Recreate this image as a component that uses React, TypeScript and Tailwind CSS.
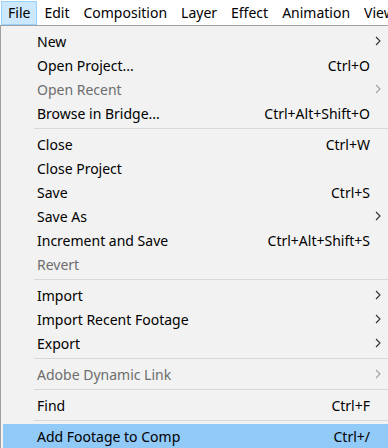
const menuBar = ['File', 'Edit', 'Composition', 'Layer', 'Effect', 'Animation', 'View']

type Item =
  | { sep: true }
  | { label: string; shortcut?: string; sub?: boolean; disabled?: boolean; active?: boolean; sep?: false }

const items: Item[] = [
  { label: 'New', sub: true },
  { label: 'Open Project...', shortcut: 'Ctrl+O' },
  { label: 'Open Recent', sub: true, disabled: true },
  { label: 'Browse in Bridge...', shortcut: 'Ctrl+Alt+Shift+O' },
  { sep: true },
  { label: 'Close', shortcut: 'Ctrl+W' },
  { label: 'Close Project' },
  { label: 'Save', shortcut: 'Ctrl+S' },
  { label: 'Save As', sub: true },
  { label: 'Increment and Save', shortcut: 'Ctrl+Alt+Shift+S' },
  { label: 'Revert', disabled: true },
  { sep: true },
  { label: 'Import', sub: true },
  { label: 'Import Recent Footage', sub: true },
  { label: 'Export', sub: true },
  { sep: true },
  { label: 'Adobe Dynamic Link', sub: true, disabled: true },
  { sep: true },
  { label: 'Find', shortcut: 'Ctrl+F' },
  { sep: true },
  { label: 'Add Footage to Comp', shortcut: 'Ctrl+/', active: true },
]

const Chevron = ({ disabled }: { disabled?: boolean }) => (
  <svg width="6" height="10" viewBox="0 0 6 10" className="block">
    <path d="M1 1 L5 5 L1 9" fill="none" stroke={disabled ? '#a0a0a0' : '#303030'} strokeWidth="1.1" />
  </svg>
)

const App = () => {
  return (
    <div
      className="w-[388px] h-[448px] overflow-hidden bg-white text-[14px] text-black"
      style={{ fontFamily: '"Noto Sans", "Open Sans", sans-serif' }}
    >
      <div className="flex h-[25px] items-center pl-px whitespace-nowrap overflow-hidden">
        {menuBar.map((m, i) => (
          <div
            key={m}
            className={
              i === 0
                ? 'h-[24px] px-[6px] flex items-center bg-[#cce8ff] border border-[#99d1ff]'
                : 'h-[24px] px-[7px] flex items-center'
            }
          >
            {m}
          </div>
        ))}
      </div>
      <div className="border-t border-l border-[#a0a0a0] bg-[#f2f2f2] h-[423px] pt-[3px] pl-[2px]">
        {items.map((it, i) =>
          it.sep ? (
            <div key={i} className="h-[7px] flex items-center pl-[31px]">
              <div className="h-px w-full bg-[#d7d7d7]" />
            </div>
          ) : (
            <div
              key={i}
              className={`h-[24px] flex items-center whitespace-nowrap ${it.active ? 'bg-[#91c9f7]' : ''} ${
                it.disabled ? 'text-[#6d6d6d]' : ''
              }`}
            >
              <div className="pl-[34px] flex-1">{it.label}</div>
              <div>{it.shortcut}</div>
              <div className="w-[18px] pl-[5px]">{it.sub && <Chevron disabled={it.disabled} />}</div>
            </div>
          )
        )}
      </div>
    </div>
  )
}

export default App
